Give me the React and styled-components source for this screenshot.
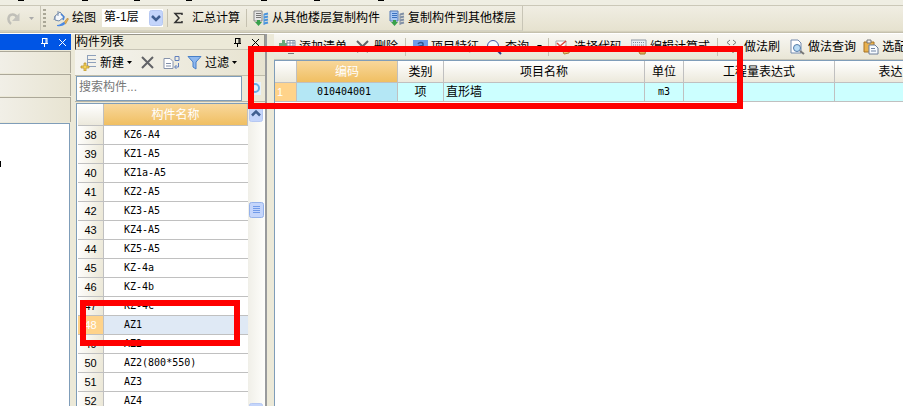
import React from 'react';
import styled, { createGlobalStyle, css } from 'styled-components';

const Global = createGlobalStyle`
  * { box-sizing: border-box; }
  body { margin: 0; background: #ece9d8; }
  body, button, input, select, table {
    font-family: "Liberation Sans", "Noto Sans CJK SC", sans-serif;
    font-size: 12px;
    color: #000;
  }
`;

const Page = styled.div`
  position: relative;
  display: flex;
  flex-direction: column;
  height: 100vh;
  overflow: hidden;
`;
const MenuStrip = styled.div`
  flex: none;
  display: grid;
  grid-template-columns: 64px 52px 52px 75px 53px 64px 1fr;
  height: 6px;
  padding-left: 18px;
  background: #efeee3;
  border-bottom: 1px solid #cbc8b8;
`;
const MenuMark = styled.span`
  width: 6px;
  height: 1px;
  background: #000;
`;
const MainBar = styled.div`
  flex: none;
  display: flex;
  height: 28px;
  padding-bottom: 2px;
  border-bottom: 1px solid #fff;
  background: linear-gradient(#f0eee3, #e6e2cf 90%, #bdb9a6);
`;
const ToolGroup = styled.div`
  display: flex;
  align-items: center;
  width: ${(p) => p.$width};
  padding-left: ${(p) => p.$inset || '1px'};
  border-right: 1px solid #c8c5b6;
  border-bottom: 1px solid #d5d2c3;
`;
const Separator = styled.span`
  flex: none;
  width: 1px;
  height: ${(p) => p.$height || '18px'};
  margin: 0 ${(p) => p.$gap || '4px'};
  background: #c5c1b0;
`;
const Grip = styled.span`
  width: 3px;
  height: 19px;
  margin: 0 7px 0 1px;
  background: repeating-linear-gradient(#aaa797 0 2px, transparent 2px 4px);
`;
const ToolButton = styled.button`
  flex: none;
  display: flex;
  align-items: center;
  gap: ${(p) => p.$gap || '3px'};
  height: 22px;
  padding: 0;
  border: 0;
  background: none;
  line-height: 16px;
  white-space: nowrap;
  svg { flex: none; }
`;
const SelectBox = styled.label`
  position: relative;
  display: flex;
  flex: none;
  width: 61px;
  height: 18px;
  margin: 0 0 0 6px;
  background: #fff;
  svg { position: absolute; right: 0; top: 1px; pointer-events: none; }
`;
const FloorSelect = styled.select`
  width: 100%;
  padding: 0 0 2px 2px;
  border: 0;
  background: #fff;
  appearance: none;
`;

const Workspace = styled.main`
  flex: 1;
  min-height: 0;
  display: grid;
  grid-template-columns: 71px 192px minmax(0, 1fr);
  gap: 0 4px;
`;
const Panel = styled.section`
  display: flex;
  flex-direction: column;
  min-width: 0;
  min-height: 0;
`;
const DetailPanel = styled(Panel)`
  margin-left: 3px;
`;
const TitleBar = styled.header`
  flex: none;
  display: flex;
  align-items: center;
  height: 16px;
  padding-right: 4px;
  line-height: 14px;
  ${(p) => p.$active
    ? css`background: #0055e5; color: #fff;`
    : css`border: 1px solid #96948a; border-bottom-color: #c8c5b6; border-left-color: #333;`}
`;
const Title = styled.h2`
  flex: 1;
  margin: 0;
  font-size: 12px;
  font-weight: 400;
`;
const IconButton = styled.button`
  display: flex;
  margin-left: ${(p) => p.$gap || '0'};
  padding: 0;
  border: 0;
  background: none;
  color: inherit;
`;
const Band = styled.div`
  flex: none;
  height: ${(p) => p.$height};
  margin-top: 1px;
  border: solid #aca899;
  border-width: 1px 1px 0 0;
  background: linear-gradient(90deg, #f1efe7, #e8e4d2);
`;
const Canvas = styled.div`
  flex: 1;
  margin: 1px 1px 0 0;
  padding-top: 37px;
  border: solid #7f9db9;
  border-width: 1px 1px 0 0;
  background: #fff;
`;
const Tick = styled.span`
  display: block;
  width: 1px;
  height: 6px;
  background: #000;
`;
const ListPanel = styled(Panel)`
  border-right: 2px solid #999b9d;
`;
const ListTools = styled.div`
  flex: none;
  display: flex;
  align-items: center;
  height: 26px;
  padding-left: 5px;
  border-bottom: 1px solid #c0bdab;
  background: linear-gradient(90deg, #f5f4ef, #e7e3d0);
`;
const SearchRow = styled.div`
  flex: none;
  display: flex;
  align-items: center;
  gap: 6px;
  height: 26px;
  padding-left: 1px;
  border-bottom: 1px solid #b8b5a5;
`;
const SearchInput = styled.input`
  width: 166px;
  height: 25px;
  padding: 0 2px 4px;
  border: 1px solid #7f9db9;
  background: #fff;
  &::placeholder { color: #777; opacity: 1; }
`;
const ListBody = styled.div`
  flex: 1;
  display: flex;
  min-height: 0;
  margin: 1px 0 0 1px;
  padding-left: 1px;
  border: solid #7f9db9;
  border-width: 1px 0 0 1px;
  background: #fff;
`;
const TableClip = styled.div`
  flex: 1;
  min-width: 0;
  overflow: hidden;
`;
const Table = styled.table`
  width: ${(p) => p.$width || '100%'};
  table-layout: fixed;
  border-collapse: separate;
  border-spacing: 0;
`;
const Head = styled.th`
  height: 22px;
  padding: 0;
  border: solid #c0c0c0;
  border-width: 0 1px 1px 0;
  font-weight: 400;
  line-height: 18px;
  white-space: nowrap;
  color: ${(p) => (p.$active ? '#fff' : '#000')};
  background: ${(p) => (p.$active
    ? 'linear-gradient(#f8d79b, #f0bf62)'
    : 'linear-gradient(#fff, #ece9dc)')};
`;
const Cell = styled.td`
  height: 19px;
  padding: 0 ${(p) => p.$trail || '0'} 0 ${(p) => p.$indent || '0'};
  border: solid #c0c0c0;
  border-width: 0 ${(p) => (p.$open ? '0' : '1px')} 1px 0;
  overflow: hidden;
  white-space: nowrap;
  line-height: ${(p) => (p.$mono ? '18px' : '16px')};
  text-align: ${(p) => p.$align || 'left'};
  background: ${(p) => p.$fill || '#fff'};
  font-family: ${(p) => (p.$mono ? '"DejaVu Sans Mono", monospace' : 'inherit')};
  font-size: ${(p) => (p.$mono ? '10px' : '12px')};
`;
const IndexCell = styled.th`
  height: 19px;
  padding: 0 0 0 ${(p) => (p.$align ? '2px' : '0')};
  border: solid #c0c0c0;
  border-width: 0 1px 1px 0;
  font-size: 11px;
  font-weight: 400;
  line-height: 16px;
  text-align: ${(p) => p.$align || 'center'};
  color: ${(p) => (p.$active ? '#fff' : '#000')};
  background: ${(p) => (p.$active ? '#ffd38a' : 'linear-gradient(100deg, #fff, #ebe7d6)')};
`;
const Scrollbar = styled.div`
  flex: none;
  display: flex;
  flex-direction: column;
  justify-content: space-between;
  width: 17px;
  background: linear-gradient(90deg, #f0efe8, #fefefb);
  svg { display: block; }
`;
const EndButton = styled(IconButton)`
  height: ${(p) => (p.$last ? '3px' : '18px')};
  padding: ${(p) => (p.$last ? '0' : '2px')} 0 0 1px;
  overflow: hidden;
`;
const Thumb = styled.span`
  flex: 1;
  padding-top: 80px;
`;
const DetailTools = styled.div`
  flex: none;
  display: flex;
  align-items: center;
  height: 26px;
  padding-left: 5px;
  overflow: hidden;
  border-bottom: 1px solid #c9c6b7;
  background: linear-gradient(#f8f7f3, #e9e6d6);
`;
const DetailBody = styled.div`
  flex: 1;
  overflow: hidden;
  border: solid #7f9db9;
  border-width: 1px 0 0 1px;
  background: #fff;
`;
const Highlight = styled.div`
  position: absolute;
  left: ${(p) => p.$x}px;
  top: ${(p) => p.$y}px;
  width: ${(p) => p.$w}px;
  height: ${(p) => p.$h}px;
  border: 6px solid #f00;
  pointer-events: none;
`;

const Svg = ({ w = 16, h = 16, children }) => (
  <svg width={w} height={h} viewBox={`0 0 ${w} ${h}`} fill="none" aria-hidden="true">{children}</svg>
);
const Pin = () => (
  <Svg w={9} h={11}><path d="M2.5 1v5M2 1.5h5M6 1v5M7 1v5M1 6.5h7M4.5 7v3" stroke="currentColor" /></Svg>
);
const Close = () => (
  <Svg w={9} h={9}><path d="M1 1l7 7M8 1L1 8" stroke="currentColor" /></Svg>
);
const Caret = ({ color = '#000' }) => (
  <Svg w={5} h={3}><path d="M0 0h5L2.5 3z" fill={color} /></Svg>
);
const Redo = () => (
  <Svg w={13} h={13}>
    <path d="M4 12C0 9 1 3 5 2.500c3-.5 4 1 5 3" stroke="#c0bfb8" strokeWidth="2.500" />
    <path d="M12.500 1v8H5z" fill="#c4c3bd" />
  </Svg>
);
const Paint = () => (
  <Svg w={16} h={17}>
    <path d="M2 6l5-4 4 5-5 4-4-1z" fill="#f4f7fb" stroke="#6f87a8" />
    <path d="M2 6L1 10M5 1v5" stroke="#7b8fae" />
    <path d="M8 4l3 3-1 3" stroke="#4a83d4" strokeWidth="1.500" />
    <path d="M14.500 8l1 1-3 5-2-1z" fill="#e8b252" stroke="#a9772c" strokeWidth=".5" />
    <path d="M4 15c3 0 4-2 7-3 3 2-1 5-7 4z" fill="#4c8ae5" />
  </Svg>
);
const Copy = ({ blue }) => (
  <Svg>
    <path d="M1 1h8v10H1z" fill={blue ? '#a9c8f4' : '#e6e6e6'} stroke={blue ? '#547bb8' : '#888'} />
    <path d="M3 3.5h5M3 5.5h5M3 7.5h5" stroke={blue ? '#3970bf' : '#777'} />
    <path d="M2 12h2v-2h3v2h2l-3.500 4z" fill="#38a04a" />
    <path d="M11 4.5l4-1M11 7.5l4-1M11 10.500l4-1M11 13.500l4-1" stroke={blue ? '#8190a6' : '#4b94dc'} strokeWidth="2" />
    <path d="M11 4v11" stroke={blue ? '#8190a6' : '#4b94dc'} />
  </Svg>
);
const Add = () => (
  <Svg w={17} h={17}>
    <path d="M8 1.5h8M8 5.5h8M8 8.5h8M8 12.5h8M7.5 1v12" stroke="#8ea0bb" />
    <path d="M4 9h2v3h3v2H6v3H4v-3H1v-2h3z" fill="#f5d45c" stroke="#b68a20" strokeWidth=".7" />
  </Svg>
);
const Cross = () => (
  <Svg w={13} h={13}><path d="M1 1l11 11M12 1L1 12" stroke="#626367" strokeWidth="2" /></Svg>
);
const CopyItem = () => (
  <Svg w={17}>
    <path d="M1 3.500h6l3 3v7H1z" fill="#fff" stroke="#8793ab" />
    <path d="M3 8.500h5M3 11h5" stroke="#8190a9" />
    <path d="M12 1.500h4v4h-4zM12 12h3.500V8M13.500 10l-2 2 2 2" stroke="#617fbd" />
  </Svg>
);
const Funnel = () => (
  <Svg w={15} h={15}><path d="M1 1.500h13L9 7v7l-3-2V7z" fill="#8eb8ef" stroke="#477fc8" /></Svg>
);
const Sheet = () => (
  <Svg w={17}>
    <path d="M3 1h3v3h3v3H6v3H3V7H0V4h3z" fill="#6ca77b" />
    <path d="M8 1.500h8v9H8z" fill="#fff" stroke="#8091a7" />
    <path d="M8 4h8M8 7h8M11 1v9M14 1v9" stroke="#8091a7" />
    <path d="M9 14.500h6" stroke="#777" />
  </Svg>
);
const Feature = () => (
  <Svg w={15}>
    <path d="M0 1h15v12H0z" fill="#6f9be8" />
    <path d="M5 5c1-2 5-2 5 0v6M10 7c-6-1-7 4-3 4 1 0 3-1 3-3" stroke="#31548f" strokeWidth="1.500" />
  </Svg>
);
const Lens = () => (
  <Svg>
    <circle cx="7" cy="7" r="5.500" fill="#f6f9ff" stroke="#4054a4" />
    <path d="M11 11l4 4" stroke="#2a367f" strokeWidth="2" />
  </Svg>
);
const Code = () => (
  <Svg>
    <path d="M1 2h10v9H1z" fill="#fff" stroke="#aaa" />
    <path d="M2 4l3 3 6-5" stroke="#d84b3f" strokeWidth="1.500" />
    <path d="M6 8l5-1 4 3-1 4-5 1z" fill="#edc06e" stroke="#af7e37" />
  </Svg>
);
const Keyboard = () => (
  <Svg>
    <path d="M0 1h15v8H0z" fill="#e9edf2" stroke="#8e98a5" />
    <path d="M2 3.500h12M2 6h12" stroke="#7e8998" strokeDasharray="1 1" />
    <path d="M6 9l5-2 4 3-1 5H9z" fill="#e2ae56" stroke="#a87628" />
  </Svg>
);
const Brush = () => (
  <Svg>
    <path d="M5 1L2 3.500l3 2.500M8 1l3 2.500L8 6" stroke="#777" />
    <path d="M5 11l3-2 3 2-3 3zM12 10l3-2" fill="#d5d0bd" stroke="#aaa58e" />
  </Svg>
);
const PageLens = () => (
  <Svg>
    <path d="M2 1h7l3 3v10H2z" fill="#fff" stroke="#7289ad" />
    <circle cx="8" cy="9" r="3.500" fill="#b8dbf5" stroke="#557ba7" />
    <path d="M11 12l4 3" stroke="#777" strokeWidth="2" />
  </Svg>
);
const Paste = () => (
  <Svg>
    <path d="M1 3h10v10H1z" fill="#e8b14d" stroke="#a67224" />
    <path d="M4 1h4v3H4z" fill="#eee" stroke="#777" />
    <path d="M6 6h6l3 3v6H6z" fill="#f7fbff" stroke="#6d7e9a" />
    <path d="M8 9.500h4M8 12h5" stroke="#7184a3" />
  </Svg>
);
const Find = () => (
  <Svg w={13} h={13}><path d="M0 0h13v13H0z" fill="#e6f1fb" /><circle cx="7" cy="6" r="4" stroke="#66afe4" strokeWidth="2" /></Svg>
);
const Sigma = () => (
  <Svg w={12} h={12}><path d="M10 3V1.500H3L7 6l-4 4.500h7V9" stroke="#333" strokeWidth="1.500" /></Svg>
);
const Arrow = ({ up }) => (
  <Svg w={14} h={16}>
    <rect x=".5" y=".5" width="13" height="15" rx="2" fill="#c4d5fb" stroke="#b6c8f2" />
    <path d={up ? 'M3 9.500l4-4 4 4' : 'M3 6l4 4 4-4'} stroke="#405f91" strokeWidth="2.500" />
  </Svg>
);
const ThumbIcon = () => (
  <Svg w={17} h={17}>
    <rect x="1.500" y=".5" width="14" height="15" rx="2" fill="#c4d5fb" stroke="#95b2ea" />
    <path d="M5 4.500h7M5 6.500h7M5 8.500h7M5 10.500h7" stroke="#719be9" />
  </Svg>
);

const items = [
  [38, 'KZ6-A4'], [39, 'KZ1-A5'], [40, 'KZ1a-A5'], [41, 'KZ2-A5'], [42, 'KZ3-A5'],
  [43, 'KZ4-A5'], [44, 'KZ5-A5'], [45, 'KZ-4a'], [46, 'KZ-4b'], [47, 'KZ-4c'],
  [48, 'AZ1'], [49, 'AZ2'], [50, 'AZ2(800*550)'], [51, 'AZ3'], [52, 'AZ4'],
];
const selected = 48;
const menus = [0, 1, 2, 3, 4, 5, 6];

export default function App() {
  return (
    <>
      <Global />
      <Page>
        <MenuStrip>{menus.map((n) => <MenuMark key={n} />)}</MenuStrip>
        <MainBar>
          <ToolGroup $width="41px" $inset="7px">
            <ToolButton $gap="9px" aria-label="重做"><Redo /><Caret color="#aaa" /></ToolButton>
          </ToolGroup>
          <ToolGroup $width="482px">
            <Grip />
            <ToolButton><Paint />绘图</ToolButton>
            <SelectBox>
              <FloorSelect aria-label="楼层" defaultValue="-1"><option value="-1">第-1层</option></FloorSelect>
              <Arrow />
            </SelectBox>
            <Separator />
            <ToolButton $gap="8px"><Sigma />汇总计算</ToolButton>
            <Separator $gap="6px" />
            <ToolButton><Copy />从其他楼层复制构件</ToolButton>
            <Separator $gap="4px" $height="0" />
            <ToolButton><Copy blue />复制构件到其他楼层</ToolButton>
          </ToolGroup>
        </MainBar>
        <Workspace>
          <Panel>
            <TitleBar $active>
              <Title />
              <IconButton aria-label="固定"><Pin /></IconButton>
              <IconButton $gap="9px" aria-label="关闭"><Close /></IconButton>
            </TitleBar>
            <Band $height="22px" /><Band $height="22px" /><Band $height="25px" />
            <Canvas><Tick /></Canvas>
          </Panel>
          <ListPanel>
            <TitleBar>
              <Title>构件列表</Title>
              <IconButton aria-label="固定列表"><Pin /></IconButton>
              <IconButton $gap="9px" aria-label="关闭列表"><Close /></IconButton>
            </TitleBar>
            <ListTools>
              <ToolButton><Add />新建<Caret /></ToolButton>
              <Separator $height="0" />
              <ToolButton aria-label="删除构件"><Cross /></ToolButton>
              <Separator $height="0" />
              <ToolButton aria-label="复制构件"><CopyItem /></ToolButton>
              <Separator $height="0" $gap="3px" />
              <ToolButton><Funnel />过滤<Caret /></ToolButton>
            </ListTools>
            <SearchRow>
              <SearchInput aria-label="搜索构件" placeholder="搜索构件..." />
              <IconButton aria-label="搜索"><Find /></IconButton>
            </SearchRow>
            <ListBody>
              <TableClip>
                <Table>
                  <colgroup><col width="26" /><col /></colgroup>
                  <thead><tr><Head aria-label="序号" /><Head $active scope="col">构件名称</Head></tr></thead>
                  <tbody>
                    {items.map(([n, name]) => (
                      <tr key={n}>
                        <IndexCell scope="row" $active={n === selected}>{n}</IndexCell>
                        <Cell $mono $open $indent="20px" $fill={n === selected ? '#dfe9f5' : undefined}>{name}</Cell>
                      </tr>
                    ))}
                  </tbody>
                </Table>
              </TableClip>
              <Scrollbar>
                <EndButton aria-label="向上"><Arrow up /></EndButton>
                <Thumb><ThumbIcon /></Thumb>
                <EndButton $last aria-label="向下"><Arrow /></EndButton>
              </Scrollbar>
            </ListBody>
          </ListPanel>
          <DetailPanel>
            <DetailTools>
              <ToolButton><Sheet />添加清单</ToolButton>
              <Separator $height="0" />
              <ToolButton $gap="5px"><Cross />删除</ToolButton>
              <Separator $gap="7px" />
              <ToolButton><Feature />项目特征</ToolButton>
              <Separator $height="0" $gap="3px" />
              <ToolButton><Lens />查询<Svg w={2} h={1} /><Caret /></ToolButton>
              <Separator $gap="6px" />
              <ToolButton><Code />选择代码</ToolButton>
              <Separator $height="0" />
              <ToolButton><Keyboard />编辑计算式</ToolButton>
              <Separator $gap="7px" />
              <ToolButton><Brush />做法刷</ToolButton>
              <Separator $height="0" />
              <ToolButton><PageLens />做法查询</ToolButton>
              <Separator $height="0" $gap="3px" />
              <ToolButton><Paste />选配</ToolButton>
            </DetailTools>
            <DetailBody>
              <Table $width="max(708px, 100%)">
                <colgroup>
                  <col width="22" /><col width="101" /><col width="46" /><col width="201" />
                  <col width="39" /><col width="151" /><col />
                </colgroup>
                <thead>
                  <tr>
                    <Head aria-label="序号" />
                    <Head $active scope="col">编码</Head>
                    {['类别', '项目名称', '单位', '工程量表达式', '表达式说明'].map((t) => <Head key={t} scope="col">{t}</Head>)}
                  </tr>
                </thead>
                <tbody>
                  <tr>
                    <IndexCell $active $align="left" scope="row">1</IndexCell>
                    <Cell $mono $align="center" $trail="6px" $fill="#b4e7f5">010404001</Cell>
                    <Cell $align="center" $fill="#ccffff">项</Cell>
                    <Cell $indent="2px" $fill="#ccffff">直形墙</Cell>
                    <Cell $mono $align="center" $fill="#ccffff">m3</Cell>
                    <Cell $fill="#ccffff" /><Cell $fill="#ccffff" />
                  </tr>
                </tbody>
              </Table>
            </DetailBody>
          </DetailPanel>
        </Workspace>
        <Highlight $x={248} $y={46} $w={495} $h={63} />
        <Highlight $x={80} $y={300} $w={160} $h={46} />
      </Page>
    </>
  );
}
